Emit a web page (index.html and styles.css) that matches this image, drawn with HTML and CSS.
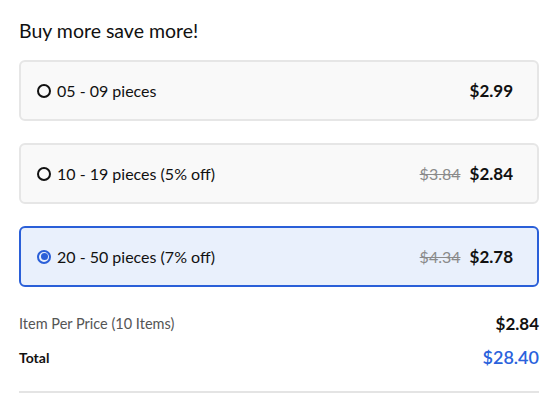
FILE: index.html
```html
<!DOCTYPE html>
<html>
<head>
<meta charset="utf-8">
<link rel="stylesheet" href="styles.css">
</head>
<body>
<div class="wrap">
  <h2 class="title">Buy more save more!</h2>
  <div class="options">
    <label class="option">
      <span class="left"><span class="radio"></span><span class="label">05 - 09 pieces</span></span>
      <span class="prices"><span class="price">$2.99</span></span>
    </label>
    <label class="option">
      <span class="left"><span class="radio"></span><span class="label">10 - 19 pieces (5% off)</span></span>
      <span class="prices"><span class="old">$3.84</span><span class="price">$2.84</span></span>
    </label>
    <label class="option selected">
      <span class="left"><span class="radio"></span><span class="label">20 - 50 pieces (7% off)</span></span>
      <span class="prices"><span class="old">$4.34</span><span class="price">$2.78</span></span>
    </label>
  </div>
  <div class="summary">
    <div class="row"><span class="muted">Item Per Price (10 Items)</span><span class="val">$2.84</span></div>
    <div class="row"><span class="strong">Total</span><span class="val total">$28.40</span></div>
  </div>
  <div class="divider"></div>
</div>
</body>
</html>
```
FILE: styles.css
```css
* { box-sizing: border-box; }
body { margin: 0; background: #fff; font-family: Lato, "Open Sans", sans-serif; color: #111; }
.wrap { padding: 18px 16px 0 19px; width: 555px; }
.title { margin: 0 0 16px; font-size: 19.5px; font-weight: 400; line-height: 26px; color: #111; }
.options { display: flex; flex-direction: column; gap: 22px; }
.option { display: flex; justify-content: space-between; align-items: center; height: 61px; padding: 0 24px 0 16px; border: 2px solid #e6e6e6; border-radius: 6px; background: #f9f9f9; }
.option.selected { border-color: #2a5fd8; background: #e9f0fc; }
.left { display: flex; align-items: center; gap: 6px; }
.radio { width: 14px; height: 14px; border: 2px solid #111; border-radius: 50%; position: relative; }
.selected .radio { border-color: #2a5fd8; }
.selected .radio::after { content: ""; position: absolute; left: 1.5px; top: 1.5px; width: 7px; height: 7px; border-radius: 50%; background: #2a5fd8; }
.label { font-size: 16px; color: #111; }
.prices { display: flex; align-items: center; gap: 9px; }
.old { font-size: 16px; color: #8a8a8a; text-decoration: line-through; }
.price { font-size: 17px; font-weight: 700; color: #111; }
.summary { margin-top: 26px; display: flex; flex-direction: column; gap: 14px; }
.row { display: flex; justify-content: space-between; align-items: center; height: 20px; }
.muted { font-size: 14.5px; color: #555; }
.strong { font-size: 14px; font-weight: 700; color: #111; }
.val { font-size: 17px; font-weight: 700; color: #111; }
.val.total { color: #2a62dc; font-size: 18px; font-weight: 600; }
.divider { margin-top: 24px; height: 2px; background: #e4e4e4; }
```
